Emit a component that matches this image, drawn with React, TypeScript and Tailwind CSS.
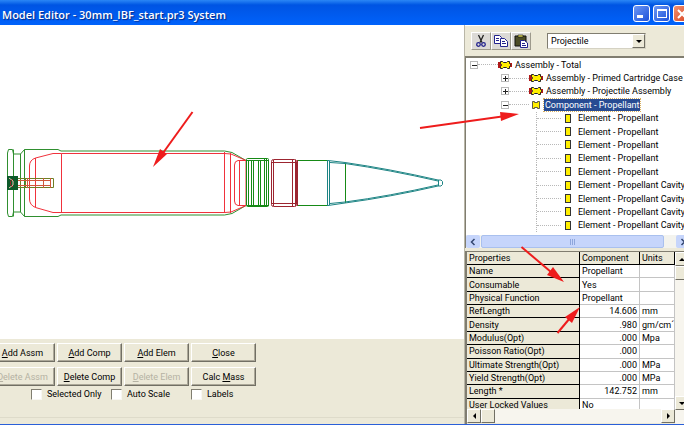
import { useState } from "react";

type NodeKind = "assembly" | "component" | "element";

interface TreeNode {
  label: string;
  kind: NodeKind;
  level: number;
  sign?: "+" | "-";
}

interface Property {
  name: string;
  value: string;
  unit: string;
  numeric?: boolean;
}

const nodes: TreeNode[] = [
  { label: "Assembly - Total", kind: "assembly", level: 0, sign: "-" },
  { label: "Assembly - Primed Cartridge Case A", kind: "assembly", level: 1, sign: "+" },
  { label: "Assembly - Projectile Assembly", kind: "assembly", level: 1, sign: "+" },
  { label: "Component - Propellant", kind: "component", level: 1, sign: "-" },
  { label: "Element - Propellant", kind: "element", level: 2 },
  { label: "Element - Propellant", kind: "element", level: 2 },
  { label: "Element - Propellant", kind: "element", level: 2 },
  { label: "Element - Propellant", kind: "element", level: 2 },
  { label: "Element - Propellant", kind: "element", level: 2 },
  { label: "Element - Propellant Cavity", kind: "element", level: 2 },
  { label: "Element - Propellant Cavity", kind: "element", level: 2 },
  { label: "Element - Propellant Cavity", kind: "element", level: 2 },
  { label: "Element - Propellant Cavity", kind: "element", level: 2 },
];

const properties: Property[] = [
  { name: "Name", value: "Propellant", unit: "" },
  { name: "Consumable", value: "Yes", unit: "" },
  { name: "Physical Function", value: "Propellant", unit: "" },
  { name: "RefLength", value: "14.606", unit: "mm", numeric: true },
  { name: "Density", value: ".980", unit: "gm/cm´", numeric: true },
  { name: "Modulus(Opt)", value: ".000", unit: "Mpa", numeric: true },
  { name: "Poisson Ratio(Opt)", value: ".000", unit: "", numeric: true },
  { name: "Ultimate Strength(Opt)", value: ".000", unit: "MPa", numeric: true },
  { name: "Yield Strength(Opt)", value: ".000", unit: "MPa", numeric: true },
  { name: "Length *", value: "142.752", unit: "mm", numeric: true },
  { name: "User Locked Values", value: "No", unit: "" },
];

// [before, underlined letter, after, disabled]
const commands: [string, string, string, boolean][] = [
  ["", "A", "dd Assm", false],
  ["", "A", "dd Comp", false],
  ["", "A", "dd Elem", false],
  ["", "C", "lose", false],
  ["", "D", "elete Assm", true],
  ["", "D", "elete Comp", false],
  ["", "D", "elete Elem", true],
  ["Calc ", "M", "ass", false],
];

function TitleBar() {
  return (
    <header className="flex h-[25px] shrink-0 items-center overflow-hidden bg-linear-to-b from-[#2b86f5] via-[#0054e3] via-20% to-[#0062fb] pl-[2px]">
      <h1 className="min-w-0 flex-1 truncate pt-1 font-['Open_Sans',sans-serif] text-[11px] leading-4 font-semibold text-white [text-shadow:1px_1px_1px_#0a2a80]">
        Model Editor - 30mm_IBF_start.pr3 System
      </h1>
      <div className="-mr-[6px] flex shrink-0 gap-[3px] pt-[2px]">
        <button aria-label="Minimize" className="flex size-[17px] items-end rounded-[3px] border border-white bg-linear-to-br from-[#6c97f5] to-[#1f4fd8] pb-[3px] pl-[3px]">
          <span className="h-[3px] w-[6px] bg-white" />
        </button>
        <button aria-label="Maximize" className="flex size-[17px] items-center justify-center rounded-[3px] border border-white bg-linear-to-br from-[#6c97f5] to-[#1f4fd8]">
          <span className="h-[9px] w-[10px] border border-t-2 border-white" />
        </button>
        <button aria-label="Close window" className="flex size-[17px] items-center justify-center rounded-[3px] border border-white bg-linear-to-br from-[#f0906f] to-[#d8401c]">
          <svg viewBox="0 0 10 10" className="size-[10px]" stroke="#fff" strokeWidth="2">
            <path d="M1 1l8 8M9 1l-8 8" />
          </svg>
        </button>
      </div>
    </header>
  );
}

function Drawing() {
  return (
    <svg
      viewBox="0 25 464 314"
      preserveAspectRatio="xMinYMid meet"
      className="w-full"
      fill="none"
      strokeWidth="1"
      role="img"
      aria-label="30mm cartridge cross section"
    >
      {/* cartridge case */}
      <g stroke="#2f8f2f">
        <path d="M8.5 149.5h4l1 4.500h7l4 -4.500H58l3 1.500H224.500L232 152.500L246 160.500" />
        <path d="M8.500 216.500h4l1 -4.500h7l4 4.500H58l3 -1.500H224.500L232 213.500L246 205.500" />
        <path d="M8.500 149.500L7.500 153V213l1 3.500M13.500 149.500V216.500M20.500 154V212M24.500 149.500V216.500" />
      </g>
      {/* propellant */}
      <g stroke="#f0323c">
        <path d="M61.500 153.500H224.500L231 154L246 160.500V205.500L231 212L224.500 212.500H53L35.500 207.500Q29.500 205 29.500 199V166Q29.500 160 35.500 158L53 153.500H61.500V212.500M35.500 158V207.500M224.500 152V213M230.500 153V213" />
        <path d="M246 160.500H238Q234.500 161 234.500 165V201Q234.500 205 238 205.500H246M239.500 161V205" />
      </g>
      {/* primer and flash tube */}
      <rect x="7" y="176" width="11" height="14" fill="#0d5a2a" />
      <path d="M9 178l4 3v4l-4 3" stroke="#f3c0b0" />
      <path d="M10.500 181v4M13 179l-2 2M13 187l-2-2" stroke="#8a2020" />
      <path d="M18 178.500H53.500V187.500H18M20.500 178V188M25.500 178V188" stroke="#6f7f25" />
      <path d="M18 180.500H50M18 185.500H50M27.500 178V188M43.500 178V188M50.500 178V188" stroke="#d0583a" />
      {/* rotating band */}
      <g stroke="#168a16">
        <rect x="246.500" y="158.500" width="22" height="48" rx="1" />
        <path d="M247 160.500H269M247 205.500H269M248.500 160V206M251.500 161V205M253.500 161V205M258.500 161V205M260.500 161V205M264.500 159V206M266.500 159V206" />
      </g>
      <g stroke="#9c2530">
        <rect x="271.500" y="159.500" width="25" height="47" rx="2" />
        <path d="M272 162.500H298M272 203.500H298M273.500 160V206M292.500 160V206M295.500 160V206M297.500 160V206" />
      </g>
      {/* projectile */}
      <path d="M298 160.500H328M298 205.500H328M345.500 163V203" stroke="#168a16" />
      <g stroke="#1d8484">
        <path d="M327.500 160V206M329.500 161V205M328 160.500L345 162.500Q390 169 438 180H441L442.500 181.500V184.500L441 186H438Q390 197 345 203L328 205.500" />
        <path d="M330 162.500L345 163.500Q390 170 438 181M330 203.500L345 202Q390 196 438 185M438.500 180V186" />
      </g>
    </svg>
  );
}

function Commands() {
  return (
    <section className="h-[85px] shrink-0 overflow-hidden bg-[#ece9d8] pt-1">
      <div className="-ml-[10px] grid w-max grid-cols-4 gap-x-[2px] gap-y-[5px]">
        {commands.map(([before, key, after, disabled]) => (
          <button
            key={before + key + after}
            disabled={disabled}
            className="h-[19px] w-[65px] border border-t-white border-r-[#716f64] border-b-[#716f64] border-l-white whitespace-nowrap shadow-[inset_-1px_-1px_0_#aca899] disabled:text-[#b5b2a3]"
          >
            {before}
            <u>{key}</u>
            {after}
          </button>
        ))}
      </div>
      <div className="mt-[2px] ml-[31px] grid w-max grid-cols-3">
        {["Selected Only", "Auto Scale", "Labels"].map((label) => (
          <label key={label} className="flex w-[80px] items-center gap-[5px] whitespace-nowrap">
            <input
              type="checkbox"
              className="size-[11px] appearance-none border border-t-[#807d70] border-r-[#f8f7f2] border-b-[#f8f7f2] border-l-[#807d70] bg-white checked:bg-[#316ac5]"
            />
            {label}
          </label>
        ))}
      </div>
      <div className="mt-[17px] border-t border-[#dedbca]" />
    </section>
  );
}

function Toolbar() {
  const button =
    "flex h-[18px] w-[20px] items-center justify-center border border-t-white border-r-[#9d9a8c] border-b-[#9d9a8c] border-l-white bg-[#dcdad6]";
  return (
    <div className="flex h-[31px] items-center border-t border-white pl-[6px]">
      <button aria-label="Cut" className={button}>
        <svg viewBox="0 0 14 14" className="size-[14px]" fill="none">
          <path d="M4.500 1L8 8.500M9.500 1L6 8.500" stroke="#222" strokeWidth="1.300" />
          <circle cx="4.500" cy="10.500" r="1.800" stroke="#23238e" strokeWidth="1.300" />
          <circle cx="9.500" cy="10.500" r="1.800" stroke="#23238e" strokeWidth="1.300" />
        </svg>
      </button>
      <button aria-label="Copy" className={button}>
        <svg viewBox="0 0 14 14" className="size-[14px]" fill="#fff" stroke="#23238e">
          <path d="M.5 1.500h5l2 2v6h-7z" />
          <path d="M6.500 4.500h4l3 3v5h-7z" />
          <path d="M2 4.500h3M2 6.500h3M8 7.500h3M8 9.500h4" />
        </svg>
      </button>
      <button aria-label="Paste" className={button}>
        <svg viewBox="0 0 14 14" className="size-[14px]">
          <path d="M1 2h11v10H1z" fill="#4c4c26" stroke="#111" />
          <path d="M4 1h5v2H4z" fill="#e6e05a" stroke="#111" strokeWidth=".6" />
          <path d="M6.500 6.500h4l3 2.500v4.500h-7z" fill="#fff" stroke="#23238e" />
          <path d="M8 9.500h3M8 11.500h4" stroke="#23238e" />
        </svg>
      </button>
      <div className="relative ml-4">
        <select
          aria-label="Model part"
          className="block h-[16px] w-[99px] appearance-none border border-t-[#807d70] border-r-[#d5d2c3] border-b-[#d5d2c3] border-l-[#807d70] bg-white pl-[3px]"
        >
          <option>Projectile</option>
          <option>Cartridge</option>
        </select>
        <span className="pointer-events-none absolute inset-y-px right-px flex w-[13px] items-center justify-center border border-t-white border-r-[#716f64] border-b-[#716f64] border-l-white bg-[#ece9d8]">
          <span className="border-x-[3px] border-t-[3px] border-x-transparent border-t-black" />
        </span>
      </div>
    </div>
  );
}

function NodeIcon({ kind }: { kind: NodeKind }) {
  if (kind === "assembly")
    return (
      <svg viewBox="0 0 14 10" className="h-[10px] w-[14px] shrink-0">
        <path d="M0 2h3v6H0zM11 3h3v4h-3z" fill="#b01818" />
        <path d="M2.500 1.500h2l1 1h3l1-1h2v2l1 1v1l-1 1v2h-2l-1-1h-3l-1 1h-2v-2l1-1v-1l-1-1z" fill="#ffef00" stroke="#222" />
      </svg>
    );
  if (kind === "component")
    return (
      <svg viewBox="0 0 8 10" className="h-[10px] w-[8px] shrink-0">
        <path d="M.5 1.500h2v1h3v-1h2v7h-2v-1h-3v1h-2z" fill="#ffef00" stroke="#333" strokeWidth=".8" />
      </svg>
    );
  return <span className="h-[9px] w-[6px] shrink-0 border border-[#333] bg-[#ffef00]" />;
}

function Toggle({ sign }: { sign: "+" | "-" }) {
  return (
    <button aria-label={sign === "+" ? "Expand" : "Collapse"} className="size-[8px] shrink-0 border border-[#b9b9b9] bg-white">
      <svg viewBox="0 0 6 6" className="size-[6px]" stroke="#222" shapeRendering="crispEdges">
        <path d={sign === "+" ? "M1 3.500h5M3.500 1v5" : "M1 3.500h5"} />
      </svg>
    </button>
  );
}

function Tree() {
  const [selected, setSelected] = useState(3);
  return (
    <div className="border-t-2 border-l border-[#807d70] bg-white">
      <ul className="grid h-[174px] auto-rows-fr overflow-hidden">
        {nodes.map((node, i) => (
          <li key={i} className="flex min-h-0 items-center whitespace-nowrap">
            {node.level === 0 && <span className="w-[4px] shrink-0" />}
            {node.level === 1 && <span className="w-[35px] shrink-0" />}
            {node.level === 2 && (
              <>
                <span className="w-[71px] shrink-0 self-stretch border-r border-dotted border-[#b8b8b8]" />
                <span className="mr-[4px] w-[24px] shrink-0 border-t border-dotted border-[#b8b8b8]" />
              </>
            )}
            {node.sign && (
              <>
                <Toggle sign={node.sign} />
                <span className="w-[20px] shrink-0 border-t border-dotted border-[#b8b8b8]" />
              </>
            )}
            <span className={node.kind === "component" ? "mr-[4px] ml-[3px] flex" : node.kind === "element" ? "mr-[6px] flex" : "mr-[2px] flex"}>
              <NodeIcon kind={node.kind} />
            </span>
            <button
              onClick={() => setSelected(i)}
              className={
                i === selected
                  ? "h-[12px] bg-[#274b93] px-px leading-[12px] text-white outline outline-dotted outline-[#d8b060]"
                  : "h-[12px] px-px leading-[12px]"
              }
            >
              {node.label}
            </button>
          </li>
        ))}
      </ul>
      <div className="mt-[3px] flex h-[13px] bg-[#f3f3ee]">
        <button aria-label="Scroll left" className="flex w-[14px] items-center justify-center rounded-[2px] bg-[#c6d5fb]">
          <svg viewBox="0 0 8 8" className="size-[8px]" fill="none" stroke="#33466f" strokeWidth="1.500">
            <path d="M5.500 1l-3 3 3 3" />
          </svg>
        </button>
        <div className="ml-px flex w-[183px] items-center justify-center gap-px rounded-[2px] border border-[#a9c0ee] bg-[#c6d5fb]">
          <span className="h-[6px] w-px bg-[#8ea6dc]" />
          <span className="h-[6px] w-px bg-[#8ea6dc]" />
          <span className="h-[6px] w-px bg-[#8ea6dc]" />
        </div>
        <button aria-label="Scroll right" className="-mr-[6px] ml-auto flex w-[14px] items-center justify-center rounded-[2px] bg-[#c6d5fb]">
          <svg viewBox="0 0 8 8" className="size-[8px]" fill="none" stroke="#33466f" strokeWidth="1.500">
            <path d="M2.500 1l3 3-3 3" />
          </svg>
        </button>
      </div>
    </div>
  );
}

function Properties() {
  const raised = "border border-t-white border-r-[#716f64] border-b-[#716f64] border-l-white bg-[#ece9d8]";
  return (
    <div className="mt-[3px] flex min-h-0 flex-1 border-t border-l-2 border-[#807d70]">
      <div className="flex min-w-0 flex-1 flex-col">
        <div className="h-[157px] overflow-hidden bg-white">
          <table className="h-[160px] w-full table-fixed border-separate border-spacing-0 text-left leading-[12px] whitespace-nowrap">
            <thead>
              <tr className="bg-[#ece9d8]">
                <th className="w-[113px] border-r border-b border-black p-0 pl-[2px] font-normal">Properties</th>
                <th className="w-[60px] border-r border-b border-black p-0 pl-[2px] font-normal">Component</th>
                <th className="border-r border-b border-black p-0 pl-[2px] font-normal">Units</th>
              </tr>
            </thead>
            <tbody>
              {properties.map((p) => (
                <tr key={p.name}>
                  <th scope="row" className="border-r border-b border-black bg-[#ece9d8] p-0 pl-[2px] font-normal">
                    {p.name}
                  </th>
                  <td className={p.numeric ? "border-r border-b border-[#c4c4c4] p-0 pr-[2px] text-right" : "border-r border-b border-[#c4c4c4] p-0 pl-[2px]"}>
                    {p.value}
                  </td>
                  <td className="border-r border-b border-[#c4c4c4] p-0 pl-[2px]">{p.unit}</td>
                </tr>
              ))}
            </tbody>
          </table>
        </div>
        <div className="flex h-[14px] bg-[#f7f5ee]">
          <button aria-label="Scroll table left" className={`flex w-[14px] items-center justify-center ${raised}`}>
            <span className="border-y-[3px] border-r-[3px] border-y-transparent border-r-black" />
          </button>
          <div className={`w-[14px] ${raised}`} />
          <button aria-label="Scroll table right" className={`ml-auto flex w-[14px] items-center justify-center ${raised}`}>
            <span className="border-y-[3px] border-l-[3px] border-y-transparent border-l-black" />
          </button>
        </div>
      </div>
      <div className="-mr-[5px] flex w-[14px] shrink-0 flex-col bg-[#f7f5ee] pb-[14px]">
        <button aria-label="Scroll table up" className={`flex h-[14px] items-center justify-center ${raised}`}>
          <span className="border-x-[3px] border-b-[3px] border-x-transparent border-b-black" />
        </button>
        <div className={`h-[14px] ${raised}`} />
        <button aria-label="Scroll table down" className={`mt-auto flex h-[14px] items-center justify-center ${raised}`}>
          <span className="border-x-[3px] border-t-[3px] border-x-transparent border-t-black" />
        </button>
      </div>
    </div>
  );
}

// red callouts drawn over the whole window
function Callouts() {
  return (
    <svg viewBox="0 0 684 425" className="pointer-events-none absolute top-0 left-0 w-full" stroke="#ee1c1c" fill="#ee1c1c" aria-hidden="true">
      <path d="M192.500 112L163 153" strokeWidth="2" />
      <path d="M153 167l7-18 7 5z" stroke="none" />
      <path d="M420 128L502 116.500" strokeWidth="2" />
      <path d="M519 114l-19-2 1 9z" stroke="none" />
      <path d="M521.500 247L551 272" strokeWidth="2" />
      <path d="M564 282l-17-7 6-8z" stroke="none" />
      <path d="M557.500 333L570 318" strokeWidth="2" />
      <path d="M580 307l-15 10 7 6z" stroke="none" />
    </svg>
  );
}

export default function App() {
  return (
    <div className="relative flex min-h-screen flex-col overflow-hidden border-b border-[#2a5fd8] bg-[#ece9d8] font-[Roboto,Arial,sans-serif] text-[9px] leading-[12px] text-black">
      <TitleBar />
      <main className="flex flex-1">
        <div className="flex min-w-0 flex-1 flex-col bg-white">
          <div className="flex-1">
            <Drawing />
          </div>
          <Commands />
        </div>
        <aside className="flex w-[220px] shrink-0 flex-col overflow-hidden border-l border-[#b9b6a7]">
          <Toolbar />
          <Tree />
          <Properties />
        </aside>
      </main>
      <Callouts />
    </div>
  );
}
